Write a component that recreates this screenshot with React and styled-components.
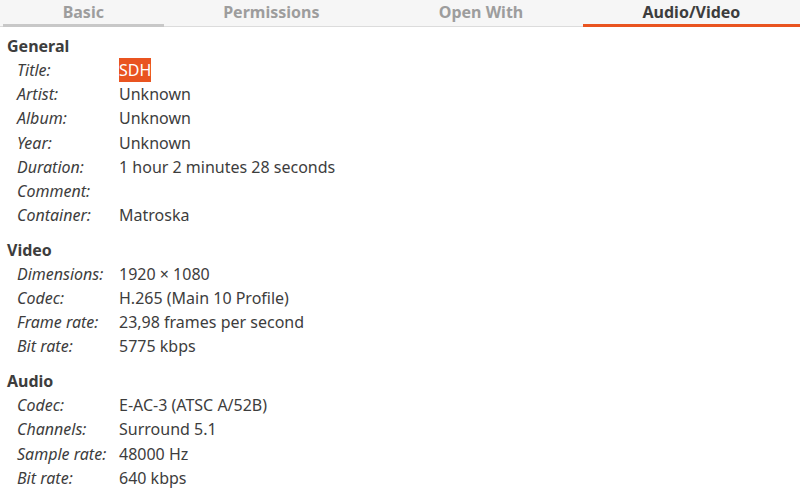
import React from "react"
import styled, { createGlobalStyle } from "styled-components"

const GlobalStyle = createGlobalStyle`
  html, body {
    margin: 0;
    padding: 0;
    background: #ffffff;
  }
  body {
    font-family: "Noto Sans", "DejaVu Sans", sans-serif;
    font-size: 16px;
    color: #3d3d3d;
  }
`

const Window = styled.div`
  width: 800px;
  height: 500px;
  overflow: hidden;
  background: #ffffff;
`

const TabBar = styled.div`
  display: flex;
  height: 27px;
  padding-left: 3px;
  background: #f6f6f6;
  border-bottom: 1px solid #dcdcdc;
  box-sizing: border-box;
`

const Tab = styled.div`
  flex: 1 1 auto;
  display: flex;
  align-items: center;
  justify-content: center;
  font-weight: bold;
  font-size: 16px;
  color: ${p => (p.active ? "#3d3d3d" : "#9d9d9d")};
  border-bottom: 3px solid ${p => (p.active ? "#e95420" : p.hover ? "#c8c8c8" : "transparent")};
  margin-bottom: -1px;
  padding-bottom: 1px;
`

const Content = styled.div`
  padding: 7px 0 0 7px;
  display: flex;
  flex-direction: column;
  gap: 10.5px;
`

const Section = styled.section`
  display: flex;
  flex-direction: column;
`

const Heading = styled.div`
  font-weight: bold;
  height: 24px;
  line-height: 24px;
`

const Grid = styled.div`
  display: grid;
  grid-template-columns: 102px auto;
  grid-auto-rows: 24.2px;
  align-items: center;
  padding-left: 10px;
`

const Label = styled.div`
  font-style: italic;
  white-space: nowrap;
`

const Value = styled.div`
  white-space: nowrap;
`

const Selected = styled.span`
  background: #e95420;
  color: #ffffff;
  padding: 1px 0;
`

const sections = [
  {
    title: "General",
    rows: [
      ["Title:", "SDH", true],
      ["Artist:", "Unknown"],
      ["Album:", "Unknown"],
      ["Year:", "Unknown"],
      ["Duration:", "1 hour 2 minutes 28 seconds"],
      ["Comment:", ""],
      ["Container:", "Matroska"],
    ],
  },
  {
    title: "Video",
    rows: [
      ["Dimensions:", "1920 × 1080"],
      ["Codec:", "H.265 (Main 10 Profile)"],
      ["Frame rate:", "23,98 frames per second"],
      ["Bit rate:", "5775 kbps"],
    ],
  },
  {
    title: "Audio",
    rows: [
      ["Codec:", "E-AC-3 (ATSC A/52B)"],
      ["Channels:", "Surround 5.1"],
      ["Sample rate:", "48000 Hz"],
      ["Bit rate:", "640 kbps"],
    ],
  },
]

const tabs = ["Basic", "Permissions", "Open With", "Audio/Video"]

export default function App() {
  return (
    <Window>
      <GlobalStyle />
      <TabBar>
        {tabs.map((t, i) => (
          <Tab key={t} active={i === 3} hover={i === 0}>{t}</Tab>
        ))}
      </TabBar>
      <Content>
        {sections.map(s => (
          <Section key={s.title}>
            <Heading>{s.title}</Heading>
            <Grid>
              {s.rows.map(([label, value, sel]) => (
                <React.Fragment key={s.title + label}>
                  <Label>{label}</Label>
                  <Value>{sel ? <Selected>{value}</Selected> : value}</Value>
                </React.Fragment>
              ))}
            </Grid>
          </Section>
        ))}
      </Content>
    </Window>
  )
}
